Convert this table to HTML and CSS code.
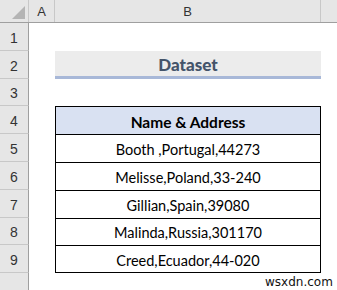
FILE: index.html
```html
<!DOCTYPE html>
<html lang="en">
<head>
    <meta charset="UTF-8">
    <title>Dataset</title>
    <link rel="stylesheet" href="styles.css">
</head>
<body>
    <div class="sheet">
        <div class="row col-heads">
            <div class="corner"><span class="corner-mark"></span></div>
            <div class="col-head">A</div>
            <div class="col-head">B</div>
            <div class="col-head last"></div>
        </div>

        <div class="row"><div class="num">1</div><div></div><div></div><div></div></div>
        <div class="row"><div class="num">2</div><div></div><div class="title">Dataset</div><div></div></div>
        <div class="row"><div class="num">3</div><div></div><div></div><div></div></div>
        <div class="row"><div class="num">4</div><div></div><div class="cell head">Name &amp; Address</div><div></div></div>
        <div class="row"><div class="num">5</div><div></div><div class="cell">Booth ,Portugal,44273</div><div></div></div>
        <div class="row"><div class="num">6</div><div></div><div class="cell">Melisse,Poland,33-240</div><div></div></div>
        <div class="row"><div class="num">7</div><div></div><div class="cell">Gillian,Spain,39080</div><div></div></div>
        <div class="row"><div class="num">8</div><div></div><div class="cell">Malinda,Russia,301170</div><div></div></div>
        <div class="row"><div class="num">9</div><div></div><div class="cell last">Creed,Ecuador,44-020</div><div></div></div>
        <div class="row"><div class="num"></div><div></div><div></div><div></div></div>
    </div>
    <div class="mark">wsxdn.com</div>
</body>
</html>
```

FILE: styles.css
```css
* {
    margin: 0;
    padding: 0;
    box-sizing: border-box;
}

body {
    background: #fff;
    font-family: 'Lato', 'Open Sans', sans-serif;
    width: 337px;
    height: 290px;
    overflow: hidden;
    position: relative;
}

.sheet {
    display: flex;
    flex-direction: column;
}

.row {
    display: grid;
    grid-template-columns: 29px 26px 266px 1fr;
    height: 27.8px;
}

/* column letters */
.col-heads {
    height: 23px;
    background: #e6e6e6;
    border-bottom: 1px solid #9f9f9f;
}

.corner {
    position: relative;
    border-right: 1px solid #c8c8c8;
}

.corner-mark {
    position: absolute;
    right: 3px;
    bottom: 3px;
    width: 0;
    height: 0;
    border-left: 13px solid transparent;
    border-bottom: 13px solid #b4b4b4;
}

.col-head {
    font-family: 'Liberation Sans', sans-serif;
    font-size: 13px;
    color: #333;
    display: flex;
    align-items: center;
    justify-content: center;
    border-right: 1px solid #c8c8c8;
    padding-top: 1px;
}

.col-head.last {
    border-right: none;
}

/* row numbers */
.num {
    background: #e6e6e6;
    border-right: 1px solid #9f9f9f;
    border-bottom: 1px solid #c8c8c8;
    font-family: 'Liberation Sans', sans-serif;
    font-size: 14px;
    color: #333;
    display: flex;
    align-items: center;
    justify-content: center;
    padding-top: 3px;
}

.title {
    background: #ececec;
    border-bottom: 3px solid #a8b8d8;
    color: #44546a;
    font-weight: 900;
    font-size: 17px;
    display: flex;
    align-items: center;
    justify-content: center;
    padding-top: 3px;
}

.cell {
    border: 1px solid #000;
    border-bottom: none;
    font-size: 14.5px;
    color: #000;
    display: flex;
    align-items: center;
    justify-content: center;
    padding-top: 2px;
}

.cell.head {
    background: #d9e1f2;
    font-weight: bold;
    font-size: 15.5px;
}

.cell.last {
    border-bottom: 1px solid #000;
}

.mark {
    position: absolute;
    left: 264px;
    top: 275px;
    font-family: 'DejaVu Sans', sans-serif;
    font-size: 12px;
    color: #111;
    background: #fff;
    padding: 0 1px;
}
```
